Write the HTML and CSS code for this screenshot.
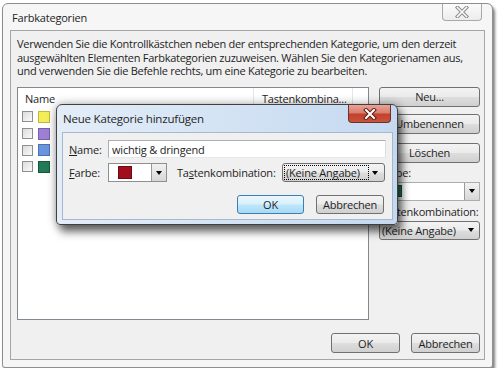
FILE: index.html
```html
<!DOCTYPE html>
<html lang="de">
<head>
    <meta charset="UTF-8">
    <title>Farbkategorien</title>
    <link rel="stylesheet" href="styles.css">
</head>
<body>

<div class="screen">
    <div class="window">
        <div class="titlebar">
            <span class="title">Farbkategorien</span>
            <div class="close-btn">
                <svg width="14" height="12" viewBox="0 0 14 12">
                    <path d="M2.5 1.5 L11.5 10.5 M11.5 1.5 L2.5 10.5" stroke="#8a8a8a" stroke-width="3.6" stroke-linecap="square" fill="none"/>
                    <path d="M2.5 1.5 L11.5 10.5 M11.5 1.5 L2.5 10.5" stroke="#fbfbfb" stroke-width="1.6" stroke-linecap="square" fill="none"/>
                </svg>
            </div>
        </div>

        <div class="panel">
            <p class="intro">
                Verwenden Sie die Kontrollkästchen neben der entsprechenden Kategorie, um den derzeit<br>
                ausgewählten Elementen Farbkategorien zuzuweisen. Wählen Sie den Kategorienamen aus,<br>
                und verwenden Sie die Befehle rechts, um eine Kategorie zu bearbeiten.
            </p>

            <div class="main">
                <div class="list">
                    <div class="list-head">
                        <span class="col-name">Name</span>
                        <span class="col-key">Tastenkombina...</span>
                        <span class="col-rest"></span>
                    </div>
                    <div class="list-row"><span class="check"></span><span class="swatch yellow"></span></div>
                    <div class="list-row"><span class="check"></span><span class="swatch purple"></span></div>
                    <div class="list-row"><span class="check"></span><span class="swatch blue"></span></div>
                    <div class="list-row"><span class="check"></span><span class="swatch green"></span></div>
                </div>

                <div class="side">
                    <div class="btn side-btn">Neu...</div>
                    <div class="btn side-btn">Umbenennen</div>
                    <div class="btn side-btn second">Löschen</div>
                    <div class="side-label">Farbe:</div>
                    <div class="color-combo">
                        <span class="swatch big green"></span>
                        <span class="drop-btn"><span class="arrow"></span></span>
                    </div>
                    <div class="side-label">Tastenkombination:</div>
                    <div class="btn key-combo">
                        <span>(Keine Angabe)</span>
                        <span class="arrow"></span>
                    </div>
                </div>
            </div>

            <div class="footer">
                <div class="btn foot-btn">OK</div>
                <div class="btn foot-btn">Abbrechen</div>
            </div>
        </div>

        <!-- modal dialog on top of the main window -->
        <div class="dialog">
            <div class="dialog-titlebar">
                <span class="dialog-title">Neue Kategorie hinzufügen</span>
                <div class="dialog-close">
                    <svg width="16" height="12" viewBox="0 0 16 12">
                        <path d="M4 2 L12 10 M12 2 L4 10" stroke="#5a1d16" stroke-width="4" stroke-linecap="square" fill="none"/>
                        <path d="M4 2 L12 10 M12 2 L4 10" stroke="#ffffff" stroke-width="2" stroke-linecap="square" fill="none"/>
                    </svg>
                </div>
            </div>
            <div class="dialog-panel">
                <div class="form-row">
                    <span class="form-label"><u>N</u>ame:</span>
                    <div class="text-input">wichtig &amp; dringend</div>
                </div>
                <div class="form-row second-row">
                    <span class="form-label"><u>F</u>arbe:</span>
                    <div class="color-combo small">
                        <span class="swatch red"></span>
                        <span class="drop-btn"><span class="arrow"></span></span>
                    </div>
                    <span class="key-label">Ta<u>s</u>tenkombination:</span>
                    <div class="btn key-combo dialog-key">
                        <span class="focus-text">(Keine Angabe)</span>
                        <span class="arrow"></span>
                    </div>
                </div>
                <div class="form-row buttons-row">
                    <div class="btn dialog-btn default">OK</div>
                    <div class="btn dialog-btn">Abbrechen</div>
                </div>
            </div>
        </div>
    </div>
</div>

</body>
</html>
```

FILE: styles.css
```css
body {
    margin: 0;
    background: #ffffff;
    font-family: "Segoe UI", "Open Sans", sans-serif;
    font-size: 11px;
    letter-spacing: -0.2px;
    color: #1e1e1e;
}
.screen {
    padding: 3px 0 0 2px;
}
.window {
    position: relative;
    width: 489px;
    height: 363px;
    border: 1px solid #8e8e8e;
    border-radius: 6px 6px 3px 3px;
    background: #f6f6f6;
    box-shadow: 2px 3px 3px rgba(0, 0, 0, 0.5);
    display: flex;
    flex-direction: column;
}
.titlebar {
    height: 26px;
    display: flex;
    align-items: flex-start;
}
.title {
    padding: 6px 0 0 9px;
    line-height: 15px;
}
.close-btn {
    margin-left: auto;
    margin-right: 10px;
    width: 38px;
    height: 16px;
    border: 1px solid #a9a9a9;
    border-top: none;
    border-radius: 0 0 4px 4px;
    background: linear-gradient(#fbfbfb, #ececec);
    display: flex;
    align-items: center;
    justify-content: center;
}
.panel {
    flex: 1;
    margin: 0 7px 7px 7px;
    border: 1px solid #a5a5a5;
    background: #f0f0f0;
    padding: 6px 4px 6px 6px;
    display: flex;
    flex-direction: column;
}
.intro {
    margin: 0 0 9px 0;
    line-height: 13.5px;
    letter-spacing: -0.27px;
    white-space: nowrap;
}
.main {
    flex: 1;
    display: flex;
    gap: 10px;
}
.list {
    width: 350px;
    border: 1px solid #828790;
    background: #ffffff;
}
.list-head {
    display: flex;
    height: 21px;
    line-height: 21px;
}
.col-name {
    width: 228px;
    padding-left: 7px;
    border-right: 1px solid #e3e6ea;
}
.col-key {
    width: 90px;
    padding-left: 8px;
    border-right: 1px solid #e3e6ea;
}
.list-row {
    height: 16.7px;
    display: flex;
    align-items: center;
    gap: 5px;
    padding-left: 4px;
}
.check {
    width: 9px;
    height: 9px;
    border: 1px solid #8e8f8f;
    background: linear-gradient(135deg, #dcdcdc, #fafafa);
}
.swatch {
    width: 10px;
    height: 10px;
    border: 1px solid;
}
.swatch.yellow { background: #f4ed5a; border-color: #c2b93a; }
.swatch.purple { background: #9d80d3; border-color: #7a5eb0; }
.swatch.blue { background: #6a95dc; border-color: #4a72b8; }
.swatch.green { background: #237a57; border-color: #17573d; }
.swatch.red { width: 12px; height: 11px; background: #a00f1b; border-color: #6e0a12; }
.swatch.big { width: 12px; height: 10px; }

.side {
    width: 101px;
    display: flex;
    flex-direction: column;
}
.btn {
    border: 1px solid #707070;
    border-radius: 3px;
    background: linear-gradient(#f3f3f3 0%, #ebebeb 48%, #dddddd 52%, #d0d0d0 100%);
    display: flex;
    align-items: center;
    justify-content: center;
    box-sizing: border-box;
    white-space: nowrap;
}
.side-btn {
    height: 20px;
    margin-bottom: 7px;
}
.side-btn.second {
    margin-top: 2px;
    margin-bottom: 3px;
}
.side-label {
    margin: 0 0 2px 1px;
    line-height: 14px;
}
.color-combo {
    height: 19px;
    box-sizing: border-box;
    border: 1px solid #abadb3;
    background: #ffffff;
    display: flex;
    align-items: center;
    padding-left: 8px;
    margin-bottom: 4px;
}
.drop-btn {
    margin-left: auto;
    width: 15px;
    height: 100%;
    box-sizing: border-box;
    border-left: 1px solid #9a9a9a;
    background: linear-gradient(#f2f2f2, #d6d6d6);
    display: flex;
    align-items: center;
    justify-content: center;
}
.arrow {
    width: 0;
    height: 0;
    border-left: 3.5px solid transparent;
    border-right: 3.5px solid transparent;
    border-top: 4px solid #000000;
}
.key-combo {
    height: 19px;
    justify-content: space-between;
    padding: 0 5px 0 2px;
}
.footer {
    margin-top: 13px;
    display: flex;
    justify-content: flex-end;
    gap: 11px;
}
.foot-btn {
    width: 69px;
    height: 20px;
}

/* dialog */
.dialog {
    position: absolute;
    left: 53px;
    top: 100px;
    width: 340px;
    height: 119px;
    border: 1px solid #404040;
    border-radius: 6px 6px 4px 4px;
    background: linear-gradient(to right, #e3edf8, #c4d9f0);
    box-shadow: 0 0 10px rgba(0, 0, 0, 0.35), 4px 7px 8px rgba(0, 0, 0, 0.55);
    display: flex;
    flex-direction: column;
}
.dialog-titlebar {
    height: 27px;
    display: flex;
    align-items: flex-start;
}
.dialog-title {
    padding: 6px 0 0 6px;
    line-height: 15px;
    font-size: 11.5px;
}
.dialog-close {
    margin-left: auto;
    margin-right: 6px;
    width: 43px;
    height: 18px;
    box-sizing: border-box;
    border: 1px solid #6e3028;
    border-top: none;
    border-radius: 0 0 4px 4px;
    background: linear-gradient(#e9a395 0%, #d9806f 45%, #c2412c 55%, #c9533c 100%);
    display: flex;
    align-items: center;
    justify-content: center;
}
.dialog-panel {
    flex: 1;
    margin: 0 4px 4px 5px;
    border: 1px solid #a8b8cc;
    background: #f0f0f0;
    padding: 7px 6px 0 6px;
}
.form-row {
    display: flex;
    align-items: center;
}
.form-label {
    width: 39px;
}
.text-input {
    flex: 1;
    height: 18px;
    box-sizing: border-box;
    border: 1px solid #abadb3;
    border-bottom-color: #e3e9ef;
    border-right-color: #dbdfe6;
    background: #ffffff;
    padding-left: 3px;
    display: flex;
    align-items: center;
}
.second-row {
    margin-top: 5px;
}
.color-combo.small {
    width: 59px;
    height: 19px;
    margin-bottom: 0;
    padding-left: 9px;
    border-color: #8e8f8f;
}
.key-label {
    width: 105px;
    margin-left: 10px;
}
.dialog-key {
    width: 103px;
    padding: 0 6px 0 2px;
}
.focus-text {
    outline: 1px dotted #000000;
    padding: 0 8px 0 1px;
    line-height: 13px;
}
.buttons-row {
    margin-top: 13px;
    justify-content: flex-end;
    gap: 12px;
    padding-right: 2px;
}
.dialog-btn {
    width: 68px;
    height: 19px;
}
.dialog-btn.default {
    width: 67px;
    border-color: #3c7fb1;
    background: linear-gradient(#eaf6fd 0%, #d9f0fc 48%, #bee6fd 52%, #a7d9f5 100%);
}
```
